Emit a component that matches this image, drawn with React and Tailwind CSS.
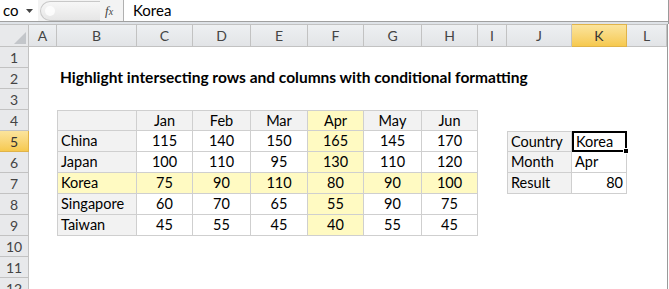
import React from 'react';

const FONT = { fontFamily: 'Lato, "Open Sans", "Liberation Sans", sans-serif' };

const colLetters = ['A', 'B', 'C', 'D', 'E', 'F', 'G', 'H', 'I', 'J', 'K', 'L'];

const months = ['Jan', 'Feb', 'Mar', 'Apr', 'May', 'Jun'];
const sales = [
  ['China', 115, 140, 150, 165, 145, 170],
  ['Japan', 100, 110, 95, 130, 110, 120],
  ['Korea', 75, 90, 110, 80, 90, 100],
  ['Singapore', 60, 70, 65, 55, 90, 75],
  ['Taiwan', 45, 55, 45, 40, 55, 45],
];

// column index: 0=A ... 11=L
const getCell = (row, col) => {
  const base = 'h-[21px] flex items-center whitespace-nowrap text-[14.5px] text-black border-b';
  const inTable = row >= 4 && row <= 9 && col >= 1 && col <= 7;

  if (row === 2 && col === 1) {
    return { text: 'Highlight intersecting rows and columns with conditional formatting', cls: `${base} border-transparent pl-[3px] font-bold text-[15.5px]` };
  }

  if (inTable) {
    const yellow = col === 5 || row === 7;
    let cls = `${base} border-r border-[#cfcfcf]`;
    if (col === 1) cls += ' border-l';
    if (row === 4) cls += ' border-t';
    if (yellow) cls += ' bg-[#fffac2]';
    else if (row === 4 || col === 1) cls += ' bg-[#f2f2f2]';
    if (col === 1) cls += ' pl-[3px]';
    else cls += ' justify-center';
    const text = row === 4 ? (col === 1 ? '' : months[col - 2]) : sales[row - 5][col - 1];
    return { text, cls };
  }

  if (row >= 5 && row <= 7 && col === 9) {
    let cls = `${base} border-r border-l border-[#cfcfcf] bg-[#f2f2f2] pl-[3px]`;
    if (row === 5) cls += ' border-t';
    return { text: ['Country', 'Month', 'Result'][row - 5], cls };
  }

  if (row >= 5 && row <= 7 && col === 10) {
    if (row === 5) {
      return {
        text: 'Korea',
        cls: 'relative h-[21px] flex items-center whitespace-nowrap text-[14.5px] text-black border-2 border-black pl-[2px]',
        handle: true,
      };
    }
    let cls = `${base} border-r border-[#cfcfcf] px-[3px]`;
    if (row === 7) cls += ' justify-end';
    return { text: row === 6 ? 'Apr' : '80', cls };
  }

  return { text: '', cls: `${base} border-transparent` };
};

const FormulaBar = () => (
  <div className="h-[24px] bg-[#dfe3e8] border-r border-[#9a9a9a]">
    <div className="h-[22px] flex items-stretch bg-white border-b border-[#a0a0a0]">
      <div className="w-[38px] flex items-center justify-between pl-[3px] pr-[5px] bg-white">
        <span className="text-[15px] text-black leading-none">co</span>
        <svg width="7" height="4" viewBox="0 0 7 4">
          <path d="M0 0h7L3.5 4z" fill="#444" />
        </svg>
      </div>
      <div className="w-[86px] flex items-center bg-[#f3f3f3] border-r border-[#b0b0b0]">
        <div className="ml-[2px] w-[60px] h-[20px] rounded-l-full border-l border-y border-[#c8c8c8] bg-gradient-to-b from-[#f7f7f7] to-[#e6e6e6] flex items-center">
          <div className="ml-[4px] w-[10px] h-[10px] rounded-full bg-white/80" />
        </div>
        <span className="ml-[5px] text-[13px] italic text-[#444]" style={{ fontFamily: '"Liberation Serif", serif' }}>
          f<span className="text-[10px]">x</span>
        </span>
      </div>
      <div className="flex-1 flex items-center pl-[9px] text-[15px] text-black">Korea</div>
    </div>
  </div>
);

export default function App() {
  const rows = Array.from({ length: 12 }, (_, i) => i + 1);

  return (
    <div className="w-[669px] h-[289px] overflow-hidden bg-white" style={FONT}>
      <FormulaBar />
      <div className="grid grid-cols-[29px_28px_80px_56px_58px_57px_56px_58px_56px_29px_65px_55px_40px_1px]">
        {/* column header row */}
        <div className="h-[23px] bg-[#e8e9eb] border-t border-r border-b border-[#c2c2c2] flex items-end justify-end p-[2px]">
          <svg width="12" height="12" viewBox="0 0 12 12">
            <path d="M12 0V12H0z" fill="#c3c6ca" />
          </svg>
        </div>
        {colLetters.map((c) => (
          <div
            key={c}
            className={
              c === 'K'
                ? 'h-[23px] flex items-center justify-center text-[14px] text-[#333] border-t border-r border-b border-[#e0b349] bg-gradient-to-b from-[#fbe49c] to-[#f6c94e]'
                : 'h-[23px] flex items-center justify-center text-[14px] text-[#444] border-t border-r border-b border-[#c2c2c2] bg-gradient-to-b from-[#eef0f2] to-[#e2e4e7]'
            }
          >
            {c}
          </div>
        ))}
        <div className="h-[23px] bg-[#9a9a9a]" />

        {rows.map((r) => (
          <React.Fragment key={r}>
            <div
              className={
                r === 5
                  ? 'h-[21px] flex items-center justify-center text-[14px] text-[#333] border-r border-b border-[#e0b349] bg-gradient-to-b from-[#fbe49c] to-[#f6c94e]'
                  : 'h-[21px] flex items-center justify-center text-[14px] text-[#444] border-r border-b border-[#c2c2c2] bg-[#e8e9eb]'
              }
            >
              {r}
            </div>
            {colLetters.map((c, ci) => {
              const cell = getCell(r, ci);
              return (
                <div key={c} className={cell.cls}>
                  {cell.text}
                  {cell.handle && (
                    <div className="absolute right-[-4px] bottom-[-4px] w-[6px] h-[6px] bg-black border border-white" />
                  )}
                </div>
              );
            })}
            <div className="h-[21px] bg-[#9a9a9a]" />
          </React.Fragment>
        ))}
      </div>
    </div>
  );
}
